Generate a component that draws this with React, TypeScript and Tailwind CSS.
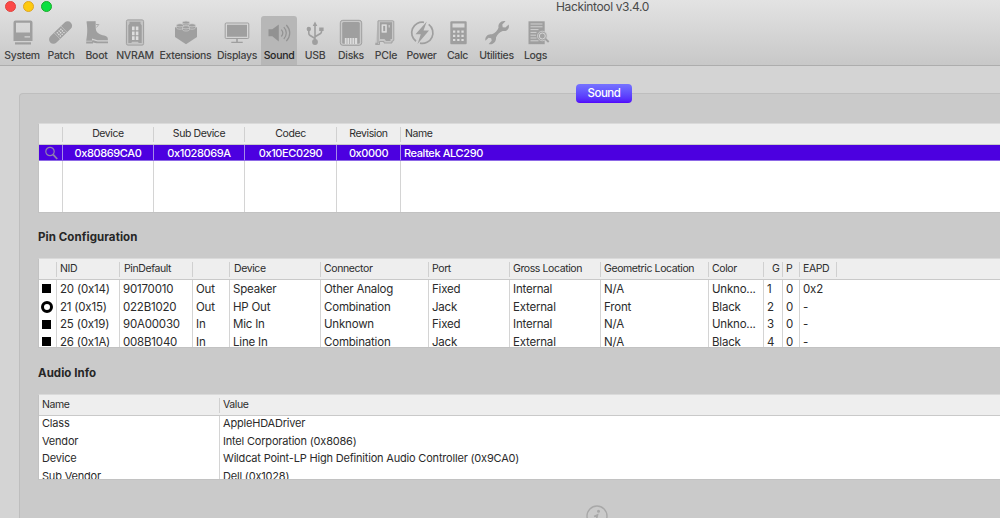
import type { ReactNode } from "react";
import clsx from "clsx";

interface ToolbarItem {
  label: string;
  width: string;
  active?: boolean;
  icon: ReactNode;
}

const toolbarItems: ToolbarItem[] = [
  {
    label: "System",
    width: "w-10",
    icon: (
      <>
        <path
          fillRule="evenodd"
          d="M7.5 1.5h15a2 2 0 0 1 2 2V22h-19V3.500a2 2 0 0 1 2-2zM8 3.700V13.500h14V3.700zM16.500 17.200h5.500v1.200h-5.500z"
        />
        <path d="M7 23.300h16v2.200H7z" />
      </>
    ),
  },
  {
    label: "Patch",
    width: "w-[38px]",
    icon: (
      <g transform="rotate(-44 13.500 13.500)">
        <rect x="-.8" y="9.200" width="28.600" height="8.800" rx="4.400" />
        <path d="M8.700 9v9M18.300 9v9" stroke="#cfcfcf" strokeWidth=".6" />
        <g fill="#dadada">
          <circle cx="11" cy="11.500" r=".8" />
          <circle cx="13.500" cy="11.500" r=".8" />
          <circle cx="16" cy="11.500" r=".8" />
          <circle cx="11" cy="13.700" r=".8" />
          <circle cx="13.500" cy="13.700" r=".8" />
          <circle cx="16" cy="13.700" r=".8" />
          <circle cx="11" cy="15.900" r=".8" />
          <circle cx="13.500" cy="15.900" r=".8" />
          <circle cx="16" cy="15.900" r=".8" />
        </g>
      </g>
    ),
  },
  {
    label: "Boot",
    width: "w-[33px]",
    icon: (
      <>
        <path d="M3.500 2.500C6 1.500 9 3 12.500 2c.6 3-.2 6 .6 9.500 1.500 3.500 5.500 4.500 9.500 5.500 2 .7 2.400 2.200 2.300 4.300H14.500L9 19.500v2.300H3.200c.8-5 1.800-9.500.3-19.300z" />
        <path d="M3.200 22.500H9l.5-1.500 5 1.600H25v1.600H13.500L10 23.500v.9H3.200z" />
        <path d="M13.500 8.500 16 5.200M13 5.500h2.500" stroke="currentColor" strokeWidth=".8" />
      </>
    ),
  },
  {
    label: "NVRAM",
    width: "w-11",
    icon: (
      <>
        <rect x="5.400" y=".9" width="17.200" height="25.200" rx="1.500" fill="#c4c4c4" stroke="currentColor" />
        <path d="M8.500 2.800h11v2l1.200 1.500V24h-3l-.7-1.300h-6L10.300 24h-3V6.300l1.200-1.500z" />
        <path d="M11 7.500h2.600v3.800H11zm3.800 0h2.600v3.800h-2.600zM11 12.400h2.600v3.800H11zm3.800 0h2.600v3.800h-2.600zM11 17.300h2.600v3.800H11zm3.800 0h2.600v3.800h-2.600z" fill="#dedede" />
      </>
    ),
  },
  {
    label: "Extensions",
    width: "w-[57px]",
    icon: (
      <>
        <path d="M3 8.500 14 4l11 4.500V18l-11 7.200L3 18z" />
        <g stroke="#d0d0d0" strokeWidth=".7">
          <path d="M10.500 3.500v2.200c0 2 7 2 7 0V3.500" fill="currentColor" />
          <ellipse cx="14" cy="3.600" rx="3.500" ry="1.500" fill="currentColor" />
          <path d="M4.500 6.500v2.200c0 2 7 2 7 0V6.500M16.500 6.500v2.200c0 2 7 2 7 0V6.500" fill="currentColor" />
          <ellipse cx="8" cy="6.300" rx="3.500" ry="1.600" fill="currentColor" />
          <ellipse cx="20" cy="6.300" rx="3.500" ry="1.600" fill="currentColor" />
          <path d="M10.500 8.500v2c0 2 7 2 7 0v-2" fill="currentColor" />
          <ellipse cx="14" cy="8.300" rx="3.500" ry="1.600" fill="currentColor" />
        </g>
      </>
    ),
  },
  {
    label: "Displays",
    width: "w-[46px]",
    icon: (
      <>
        <rect x="2.200" y="4" width="23.600" height="15.500" rx="1" fill="none" stroke="currentColor" />
        <path d="M4 5.800h20v12H4zM13.200 19.500h1.600V23h-1.600zM8.300 22.800h11.400v1.200H8.300z" />
      </>
    ),
  },
  {
    label: "Sound",
    width: "ml-px w-9",
    active: true,
    icon: (
      <>
        <path d="M3.500 10.200h3.800l6.500-4.700v17l-6.500-5.200H3.500z" />
        <path
          d="M16.300 10.700c1.800 2 1.800 4.800 0 6.800M18.800 8.200c3.300 3.500 3.300 8.300 0 11.800M21.300 6c4.600 4.800 4.600 11.400 0 16.200"
          fill="none"
          stroke="currentColor"
          strokeWidth="1.200"
        />
      </>
    ),
  },
  {
    label: "USB",
    width: "w-9",
    icon: (
      <>
        <path
          d="M14 22V5M14 19.500l-5.200-3.200q-1-.7-1-2V11M14 17.800l5.500-3.300q1-.7 1-2V10"
          fill="none"
          stroke="currentColor"
          strokeWidth="1.600"
        />
        <path d="M14 2.500 16.300 7h-4.600zM18.200 8.400h4.400v3.700h-4.400z" />
        <circle cx="7.800" cy="10" r="2.200" />
        <circle cx="14" cy="23" r="2.900" />
      </>
    ),
  },
  {
    label: "Disks",
    width: "w-9",
    icon: (
      <>
        <rect x="3.300" y="1.300" width="21.400" height="25" rx="2.500" fill="#c8c8c8" stroke="currentColor" />
        <rect x="5.200" y="3" width="17.600" height="21.800" rx="1.500" />
        <path d="M7.800 19h12.400v6H7.800z" fill="#dcdcdc" />
        <path d="M10 19v6M12.500 19v6M15 19v6M17.500 19v6" stroke="currentColor" strokeWidth=".7" />
      </>
    ),
  },
  {
    label: "PCIe",
    width: "w-[34px]",
    icon: (
      <>
        <path
          d="M6 1.800h14.800q1 0 1 1V21q0 1-1 1H20v2h-8v-1.500H7.500v3H3.300"
          fill="#c6c6c6"
          stroke="currentColor"
          strokeWidth=".9"
        />
        <path d="M6 1.800v22.500H3.300" fill="none" stroke="currentColor" />
        <path
          fillRule="evenodd"
          d="M8 3.300h12V20h-1.500v2H14l-1.500-2H8zM9.700 5.500v8h5v-8zM16.500 6v2.500H18V6z"
        />
        <path d="M9.700 5.500h5v8h-5z" fill="#dcdcdc" />
        <path d="M11.200 6.900h2v5.200h-2z" />
      </>
    ),
  },
  {
    label: "Power",
    width: "w-[37px]",
    icon: (
      <>
        <path
          d="M16 3.300A10.600 10.600 0 0 0 8 22.300M12 24.200a10.600 10.600 0 0 0 8.700-18.800"
          fill="none"
          stroke="currentColor"
          strokeWidth="1.700"
        />
        <path d="M18.800 2.500 7.500 15.200h5.300L9.500 25 21 11.500h-5.500z" />
      </>
    ),
  },
  {
    label: "Calc",
    width: "w-[35px]",
    icon: (
      <>
        <path
          fillRule="evenodd"
          d="M7.300 2.300h14.400q1 0 1 1v21q0 1-1 1H7.300q-1 0-1-1v-21q0-1 1-1zM8.500 4.500v4h12v-4z"
        />
        <path
          d="M9 11.500h2.300v2.200H9zm4.200 0h2.300v2.200h-2.300zm4.200 0h2.300v2.200h-2.300zM9 15.700h2.300v2.200H9zm4.200 0h2.300v2.200h-2.300zm4.200 0h2.300v2.200h-2.300zM9 19.900h2.300v2.200H9zm4.200 0h2.300v2.200h-2.300zm4.200 0h2.300v2.200h-2.300z"
          fill="#dcdcdc"
        />
      </>
    ),
  },
  {
    label: "Utilities",
    width: "w-[43px]",
    icon: (
      <path d="M22.500 2.300 19.300 5.500l.4 2.700 2.700.4 3.300-3.200c1.200 4.300-2 7.300-6 6.500-2.800 1-5.700 3.700-6.700 6.600.5 4.300-3.300 7.800-7.300 6.500l3-3.200-.5-2.500-2.600-.6-3.200 3.100c-.7-4.300 2.600-7.300 6.600-6.500 2.800-1 5.600-3.600 6.500-6.500-.7-4.200 2.800-7.600 7-6.500z" />
    ),
  },
  {
    label: "Logs",
    width: "w-[35px]",
    icon: (
      <>
        <path d="M6.500 2.300h16.200v22.900H6.500z" />
        <path d="M8.500 5h12M8.500 7.800h12M8.500 10.600h8M8.500 13.400h6M8.500 16.200h5.500M8.500 19h6M8.500 21.800h8" stroke="#d6d6d6" strokeWidth=".9" />
        <circle cx="20.300" cy="17" r="4.800" fill="#a3a3a3" stroke="#d0d0d0" strokeWidth=".8" />
        <circle cx="20.300" cy="17" r="3" fill="none" stroke="#d6d6d6" strokeWidth="1" />
        <path d="m23.500 20 3.200 3" stroke="currentColor" strokeWidth="1.800" />
      </>
    ),
  },
];

interface Column {
  title: string;
  width: string;
  head?: string;
  cell?: string;
}

const codecColumns: Column[] = [
  { title: "", width: "w-6" },
  { title: "Device", width: "w-[91px]", head: "text-center", cell: "text-center" },
  { title: "Sub Device", width: "w-[91px]", head: "text-center", cell: "text-center" },
  { title: "Codec", width: "w-[92px]", head: "text-center", cell: "text-center" },
  { title: "Revision", width: "w-[64px]", head: "text-center", cell: "text-center" },
  { title: "Name", width: "w-[620px]", head: "pl-1", cell: "pl-[3px]" },
];

const codecRow = ["", "0x80869CA0", "0x1028069A", "0x10EC0290", "0x0000", "Realtek ALC290"];

const pinColumns: Column[] = [
  { title: "", width: "w-[18px]" },
  { title: "NID", width: "w-[63px]", head: "pl-[3px]" },
  { title: "PinDefault", width: "w-[73px]" },
  { title: "", width: "w-[37px]" },
  { title: "Device", width: "w-[91px]" },
  { title: "Connector", width: "w-[108px]", head: "pl-[3px]" },
  { title: "Port", width: "w-[81px]", head: "pl-[3px]" },
  { title: "Gross Location", width: "w-[91px]", head: "pl-[3px]" },
  { title: "Geometric Location", width: "w-[108px]", head: "pl-[3px]" },
  { title: "Color", width: "w-[55px]", head: "pl-[3px]" },
  { title: "G", width: "w-[19px]", head: "pl-2" },
  { title: "P", width: "w-[17px]", head: "pl-[3px]" },
  { title: "EAPD", width: "w-[37px]", head: "pl-[3px]" },
];

const pinRows = [
  ["square", "20 (0x14)", "90170010", "Out", "Speaker", "Other Analog", "Fixed", "Internal", "N/A", "Unkno...", "1", "0", "0x2"],
  ["ring", "21 (0x15)", "022B1020", "Out", "HP Out", "Combination", "Jack", "External", "Front", "Black", "2", "0", "-"],
  ["square", "25 (0x19)", "90A00030", "In", "Mic In", "Unknown", "Fixed", "Internal", "N/A", "Unkno...", "3", "0", "-"],
  ["square", "26 (0x1A)", "008B1040", "In", "Line In", "Combination", "Jack", "External", "N/A", "Black", "4", "0", "-"],
];

const audioRows = [
  ["Class", "AppleHDADriver"],
  ["Vendor", "Intel Corporation (0x8086)"],
  ["Device", "Wildcat Point-LP High Definition Audio Controller (0x9CA0)"],
  ["Sub Vendor", "Dell (0x1028)"],
];

const Toolbar = () => (
  <header className="h-[66px] shrink-0 border-b border-[#adadad] bg-linear-to-b from-[#e3e3e3] to-[#c8c8c8]">
    <div className="flex h-4 items-start">
      <div className="flex w-[556px] gap-[7px] pt-px pl-[5px]">
        <span className="size-[11px] rounded-full border border-[#e0443e] bg-[#fc4a48]" />
        <span className="size-[11px] rounded-full border border-[#dea523] bg-[#fdca0e]" />
        <span className="size-[11px] rounded-full border border-[#1aab29] bg-[#0be041]" />
      </div>
      <h1 className="text-[12px] leading-[14px] tracking-[-0.350px] text-[#4a4a4a]">Hackintool v3.4.0</h1>
    </div>
    <nav className="flex h-[49px] pl-0.5">
      {toolbarItems.map((item) => (
        <button
          key={item.label}
          className={clsx(
            "flex shrink-0 flex-col items-center pt-[3px]",
            item.width,
            item.active ? "rounded-t-[3px] bg-[#b7b7b7] text-[#929292]" : "text-[#9f9f9f]",
          )}
        >
          <svg viewBox="0 0 28 28" className="size-7 shrink-0" fill="currentColor">
            {item.icon}
          </svg>
          <span
            className={clsx(
              "pt-px text-[10.500px] leading-4 font-medium tracking-[-0.300px]",
              item.active ? "text-[#252525]" : "text-[#424242]",
            )}
          >
            {item.label}
          </span>
        </button>
      ))}
    </nav>
  </header>
);

const TableHead = ({ columns }: { columns: Column[] }) => (
  <div className="flex h-[21px] shrink-0 items-center border-b border-[#c9c9c9] bg-[#eeeeee] text-[10.500px] tracking-[-0.400px] text-[#2c2c2c]">
    {columns.map((col, i) => (
      <div
        key={i}
        className={clsx("h-[15px] shrink-0 border-r border-[#d0d0d0] leading-[14px] whitespace-nowrap", col.width, col.head ?? "pl-1")}
      >
        {col.title}
      </div>
    ))}
  </div>
);

const CodecTable = () => (
  <div className="flex h-[90px] shrink-0 flex-col overflow-hidden border-y border-l border-[#c2c2c2] border-t-[#dadada] bg-white">
    <TableHead columns={codecColumns} />
    <div className="flex h-4 shrink-0 items-stretch border-b border-[#8d68e6] bg-[#4c00e0] text-[11px] leading-4 font-medium tracking-[-0.400px] text-white">
      {codecRow.map((value, i) => (
        <div key={i} className={clsx("shrink-0 border-r border-[#a58be8] whitespace-nowrap", codecColumns[i].width, codecColumns[i].cell)}>
          {i === 0 ? (
            <svg viewBox="0 0 16 16" className="ml-[5px] size-4" fill="none" stroke="#9082ab">
              <circle cx="6" cy="6.500" r="4.200" strokeWidth="1.200" />
              <path d="m9.200 9.700 4 4.300" strokeWidth="1.800" />
            </svg>
          ) : (
            value
          )}
        </div>
      ))}
    </div>
    <div className="flex flex-1">
      {codecColumns.map((col, i) => (
        <div key={i} className={clsx("shrink-0 border-r border-[#d4d4d4]", col.width)} />
      ))}
    </div>
  </div>
);

const PinMarker = ({ kind }: { kind: string }) =>
  kind === "ring" ? (
    <span className="size-3 rounded-full border-[3px] border-black" />
  ) : (
    <span className="size-[9px] bg-black" />
  );

const PinTable = () => (
  <div className="flex h-[90px] shrink-0 flex-col overflow-hidden border-y border-l border-[#c2c2c2] border-t-[#dadada] bg-white">
    <TableHead columns={pinColumns} />
    <div className="flex shrink-0 text-[11.500px] tracking-[-0.200px] text-[#2b2b2b]">
      {pinColumns.map((col, c) => (
        <div
          key={c}
          className={clsx(
            "h-[90px] shrink-0 whitespace-nowrap",
            col.width,
            c > 0 && "pt-px pl-[3px]",
            c < 12 && "border-r border-[#d4d4d4]",
          )}
        >
          {pinRows.map((row) =>
            c === 0 ? (
              <div key={row[1]} className="flex h-[17.700px] w-[15px] items-center justify-center">
                <PinMarker kind={row[c]} />
              </div>
            ) : (
              <div key={row[1]} className="h-[17.700px] leading-[17.700px]">
                {row[c]}
              </div>
            ),
          )}
        </div>
      ))}
    </div>
  </div>
);

const AudioTable = () => (
  <div className="flex h-[86px] shrink-0 flex-col overflow-hidden border-y border-l border-[#c2c2c2] border-t-[#dadada] bg-white">
    <TableHead
      columns={[
        { title: "Name", width: "w-[181px]", head: "pl-[3px]" },
        { title: "Value", width: "w-[800px]", head: "pl-[3px]" },
      ]}
    />
    <div className="flex shrink-0 text-[11px] tracking-[-0.190px] text-[#2b2b2b]">
      {[0, 1].map((c) => (
        <div key={c} className={clsx("h-20 shrink-0 pl-[3px]", c === 0 && "w-[181px] border-r border-[#d4d4d4]")}>
          {audioRows.map((row) => (
            <div key={row[0]} className="h-[17.700px] leading-[15.700px] whitespace-nowrap">
              {row[c]}
            </div>
          ))}
        </div>
      ))}
    </div>
  </div>
);

export default function App() {
  return (
    <div className="flex h-[518px] w-[1000px] flex-col overflow-hidden bg-[#d4d4d4] font-['Inter','Liberation_Sans',sans-serif]">
      <Toolbar />
      <main className="flex flex-1 flex-col pt-[27px] pl-[19px]">
        <section className="flex h-[425px] shrink-0 flex-col rounded-tl-[4px] border-t border-l border-[#bebebe] bg-[#cacaca] pl-[18px]">
          <div className="relative h-[29px] shrink-0">
            <button className="absolute -top-[10px] left-[538px] h-[19px] w-14 rounded-[4px] bg-linear-to-b from-[#7672ff] to-[#5200fb] pb-px text-[11.500px] leading-[17px] font-medium tracking-[-0.500px] text-white">
              Sound
            </button>
          </div>
          <CodecTable />
          <h2 className="h-[45px] shrink-0 pt-4 text-[11.500px] leading-4 font-bold tracking-[0.080px] text-[#262626]">
            Pin Configuration
          </h2>
          <PinTable />
          <h2 className="h-[46px] shrink-0 pt-[17px] text-[11.500px] leading-4 font-bold tracking-[0.050px] text-[#262626]">
            Audio Info
          </h2>
          <AudioTable />
          <svg viewBox="0 0 22 22" className="mt-[25px] ml-[548px] size-[22px] shrink-0" fill="none" stroke="#a8a8a8">
            <circle cx="11" cy="11" r="10" strokeWidth="1.400" />
            <circle cx="12.500" cy="6.300" r="1.500" fill="#a8a8a8" stroke="none" />
            <path d="m8 11.500 3.500-1.500-1.700 6.500 3.500-1.500" strokeWidth="1.600" />
          </svg>
        </section>
      </main>
    </div>
  );
}
